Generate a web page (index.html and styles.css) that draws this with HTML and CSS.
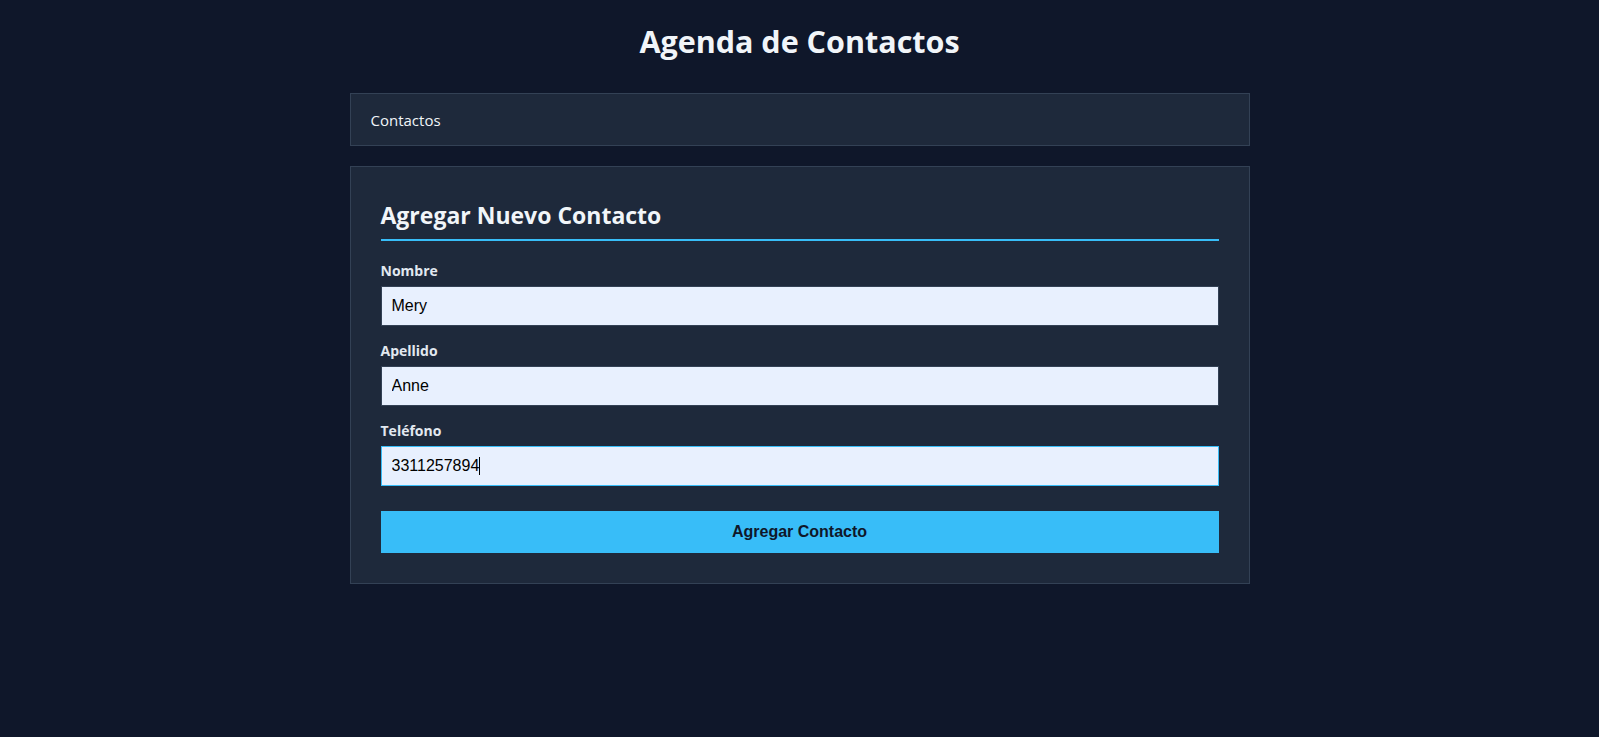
FILE: index.html
```html
<!DOCTYPE html>
<html lang="es">
<head>
<meta charset="utf-8">
<title>Agenda de Contactos</title>
<link rel="stylesheet" href="styles.css">
</head>
<body>
  <main class="app">
    <h1 class="app-title">Agenda de Contactos</h1>
    <nav class="nav-bar">
      <span class="nav-link">Contactos</span>
    </nav>
    <section class="card">
      <h2 class="card-title">Agregar Nuevo Contacto</h2>
      <form class="contact-form">
        <div class="field">
          <label class="field-label" for="nombre">Nombre</label>
          <input class="field-input" id="nombre" type="text" value="Mery">
        </div>
        <div class="field">
          <label class="field-label" for="apellido">Apellido</label>
          <input class="field-input" id="apellido" type="text" value="Anne">
        </div>
        <div class="field">
          <label class="field-label" for="telefono">Teléfono</label>
          <div class="input-wrap">
            <input class="field-input field-input--active" id="telefono" type="text" value="3311257894">
            <span class="caret"></span>
          </div>
        </div>
        <button class="submit-btn" type="button">Agregar Contacto</button>
      </form>
    </section>
  </main>
</body>
</html>
```

FILE: styles.css
```css
html, body {
  margin: 0;
  padding: 0;
  background: #0f172a;
}

body {
  padding: 20px;
  font-family: "Open Sans", "Noto Sans", sans-serif;
  color: #f1f5f9;
}

.app {
  max-width: 900px;
  margin: 0 auto;
}

.app-title {
  margin: 0 0 31px;
  font-size: 30.5px;
  line-height: 42px;
  font-weight: 700;
  text-align: center;
  color: #f1f5f9;
}

.nav-bar {
  background: #1e293b;
  border: 1px solid #334155;
  padding: 16px 20px 14px;
  font-size: 15px;
  line-height: 21px;
}

.nav-link {
  color: #f1f5f9;
}

.card {
  margin-top: 20px;
  background: #1e293b;
  border: 1px solid #334155;
  padding: 30px;
}

.card-title {
  margin: 0 0 20px;
  padding: 2px 0 8px;
  border-bottom: 2px solid #38bdf8;
  font-size: 23px;
  line-height: 32px;
  font-weight: 700;
  color: #f1f5f9;
}

.contact-form {
  display: flex;
  flex-direction: column;
}

.field {
  display: flex;
  flex-direction: column;
  margin-bottom: 15px;
}

.field-label {
  font-size: 14px;
  line-height: 20px;
  font-weight: 700;
  margin-bottom: 5px;
  color: #e2e8f0;
}

.input-wrap {
  position: relative;
}

.field-input {
  display: block;
  box-sizing: border-box;
  width: 100%;
  height: 40px;
  padding: 10px;
  border: 1px solid #334155;
  border-radius: 0;
  background: #e8f0fe;
  color: #000;
  font-family: "Liberation Sans", Arial, sans-serif;
  font-size: 16px;
  line-height: 18px;
  outline: none;
}

.field-input--active {
  border-color: #38bdf8;
}

.caret {
  position: absolute;
  left: 98px;
  top: 11px;
  width: 1px;
  height: 18px;
  background: #000;
}

.submit-btn {
  margin-top: 10px;
  height: 42px;
  padding: 12px;
  border: none;
  border-radius: 0;
  background: #38bdf8;
  color: #0f172a;
  font-family: "Liberation Sans", Arial, sans-serif;
  font-size: 16px;
  line-height: 18px;
  font-weight: 700;
  cursor: pointer;
}
```
